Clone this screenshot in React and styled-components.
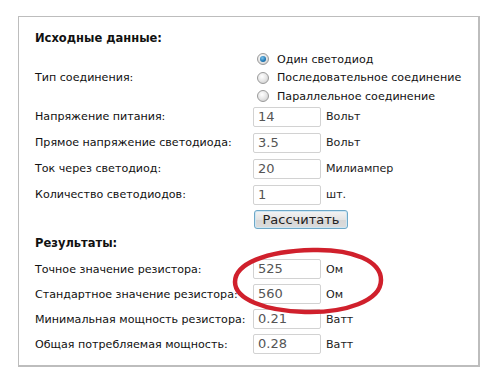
import styled, { createGlobalStyle } from "styled-components";

const GlobalStyle = createGlobalStyle`
  html, body {
    margin: 0;
    padding: 0;
    background: #ffffff;
  }
  body {
    font-family: "DejaVu Sans", Verdana, sans-serif;
    font-size: 11.1px;
    color: #111;
  }
`;

const inputRows = [
  { label: "Напряжение питания:", value: "14", unit: "Вольт" },
  { label: "Прямое напряжение светодиода:", value: "3.5", unit: "Вольт" },
  { label: "Ток через светодиод:", value: "20", unit: "Милиампер" },
  { label: "Количество светодиодов:", value: "1", unit: "шт." },
];

const resultRows = [
  { label: "Точное значение резистора:", value: "525", unit: "Ом" },
  { label: "Стандартное значение резистора:", value: "560", unit: "Ом" },
  { label: "Минимальная мощность резистора:", value: "0.21", unit: "Ватт" },
  { label: "Общая потребляемая мощность:", value: "0.28", unit: "Ватт" },
];

const radios = [
  { label: "Один светодиод", checked: true },
  { label: "Последовательное соединение" },
  { label: "Параллельное соединение" },
];

const App = () => {
  return (
    <>
      <GlobalStyle />
      <Panel>
        <Heading>Исходные данные:</Heading>
        <Row>
          <Label padTop={6}>Тип соединения:</Label>
          <RadioGroup>
            {radios.map((item) => (
              <RadioLine key={item.label}>
                <Radio checked={item.checked} />
                {item.label}
              </RadioLine>
            ))}
          </RadioGroup>
        </Row>
        {inputRows.map((item) => (
          <Row key={item.label} height={26}>
            <Label>{item.label}</Label>
            <Field>
              <Input>{item.value}</Input>
              <Unit>{item.unit}</Unit>
            </Field>
          </Row>
        ))}
        <ButtonRow>
          <Button>Рассчитать</Button>
        </ButtonRow>
        <Heading marginTop={6}>Результаты:</Heading>
        <Results>
          {resultRows.map((item) => (
            <Row key={item.label} height={25}>
              <Label>{item.label}</Label>
              <Field>
                <Input>{item.value}</Input>
                <Unit>{item.unit}</Unit>
              </Field>
            </Row>
          ))}
          <Mark viewBox="0 0 160 70">
            <path
              d="M84 3 C124 2 152 14 152 33 C152 54 116 66 76 65 C36 64 6 52 6 35 C6 17 36 4 84 3 Z"
              fill="none"
              stroke="#d0202c"
              strokeWidth="4.5"
            />
          </Mark>
        </Results>
      </Panel>
    </>
  );
};
export default App;

const Panel = styled.div`
  box-sizing: border-box;
  width: 462px;
  height: 351px;
  margin: 16px 0 0 18px;
  border: 1px solid #bdbdbd;
  border-right-width: 2px;
  border-bottom-width: 2px;
  padding: 13px 0 0 16px;
`;

const Heading = styled.div`
  font-weight: bold;
  font-size: 11.5px;
  height: 16px;
  line-height: 16px;
  margin-top: ${(props) => props.marginTop || 0}px;
`;

const Row = styled.div`
  display: grid;
  grid-template-columns: 218px auto;
  align-items: center;
  height: ${(props) => (props.height ? props.height + "px" : "auto")};
`;

const Label = styled.div`
  white-space: nowrap;
  padding-top: ${(props) => props.padTop || 0}px;
`;

const RadioGroup = styled.div`
  display: flex;
  flex-direction: column;
  margin: 4px 0 -2px 4px;
`;

const RadioLine = styled.div`
  display: flex;
  align-items: center;
  height: 18.5px;
  gap: 8px;
`;

const Radio = styled.span`
  box-sizing: border-box;
  width: 12px;
  height: 12px;
  border-radius: 50%;
  border: 1px solid #9a9a9a;
  background: radial-gradient(circle at 40% 35%, #ffffff 0%, #e6e6e6 50%, #c4c4c4 100%);
  position: relative;
  &::after {
    content: "";
    display: ${(props) => (props.checked ? "block" : "none")};
    position: absolute;
    left: 2px;
    top: 2px;
    width: 6px;
    height: 6px;
    border-radius: 50%;
    background: radial-gradient(circle at 40% 35%, #7ec3ea 0%, #1f77b4 60%, #0b4f80 100%);
  }
`;

const Field = styled.div`
  display: flex;
  align-items: center;
  gap: 5px;
`;

const Input = styled.div`
  box-sizing: border-box;
  width: 68px;
  height: 20px;
  border: 1px solid #d2d2d2;
  border-radius: 2px;
  padding: 0 4px;
  line-height: 18px;
  font-size: 13px;
  color: #555;
`;

const Unit = styled.span`
  color: #222;
`;

const ButtonRow = styled.div`
  padding-left: 219px;
  margin-top: 2px;
`;

const Button = styled.div`
  box-sizing: border-box;
  width: 94px;
  height: 19px;
  border: 1px solid #6ea8c8;
  border-radius: 3px;
  background: linear-gradient(#f4f4f4, #e4e4e4 50%, #d6d6d6 51%, #dcdcdc);
  box-shadow: inset 0 0 0 1px #cfe6f2;
  font-size: 13px;
  line-height: 17px;
  text-align: center;
  color: #222;
`;

const Results = styled.div`
  position: relative;
  margin-top: 6px;
`;

const Mark = styled.svg`
  position: absolute;
  left: 194px;
  top: -10px;
  width: 160px;
  height: 70px;
  pointer-events: none;
`;
